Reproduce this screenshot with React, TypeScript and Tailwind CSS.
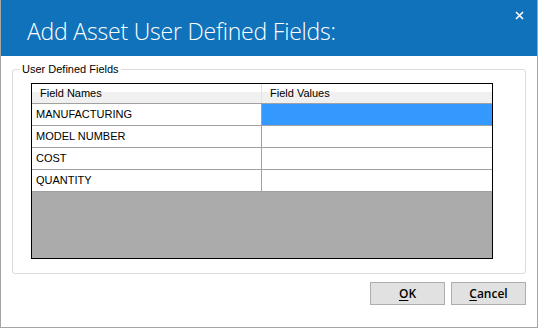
import React from 'react';

const rows = ['MANUFACTURING', 'MODEL NUMBER', 'COST', 'QUANTITY'];

const App: React.FC = () => {
  return (
    <div className="w-[538px] h-[328px] bg-white border-x border-b border-[#a5a5a5] flex flex-col font-['Liberation_Sans',Arial,sans-serif] text-[11px] text-black">
      {/* Title bar */}
      <div className="relative h-[56px] shrink-0 bg-[#1072bb] flex items-center pl-[26px]">
        <h1 className="font-['Open_Sans',sans-serif] font-light text-[23px] text-white tracking-[-0.2px] leading-none pt-[6px]">
          Add Asset User Defined Fields:
        </h1>
        <button className="absolute right-[13px] top-[11px] w-[9px] h-[9px] flex items-center justify-center">
          <svg width="9" height="9" viewBox="0 0 9 9">
            <path d="M1 1 L8 8 M8 1 L1 8" stroke="white" strokeWidth="1.6" />
          </svg>
        </button>
      </div>

      {/* Body */}
      <div className="flex-1 flex flex-col px-[11px] pt-[7px]">
        <fieldset className="border border-[#dcdcdc] rounded-[3px] pb-[14px] pt-[7px]">
          <legend className="ml-[7px] px-[2px] leading-[13px]">User Defined Fields</legend>

          {/* Grid */}
          <div className="ml-[18px] w-[462px] h-[176px] border border-black flex flex-col bg-[#ababab]">
            <div className="flex h-[20px] shrink-0 bg-[linear-gradient(to_bottom,#ffffff_0%,#ffffff_40%,#f0f0f0_41%,#f0f0f0_100%)] border-b border-[#a0a0a0]">
              <div className="w-[230px] flex items-center pl-[8px] border-r border-[#e3e3e3]">Field Names</div>
              <div className="flex-1 flex items-center pl-[8px] mr-[2px]">Field Values</div>
            </div>
            {rows.map((name, i) => (
              <div key={name} className="flex h-[22px] shrink-0 bg-white border-b border-[#a0a0a0]">
                <div className="w-[230px] flex items-center pl-[4px] border-r border-[#a0a0a0]">{name}</div>
                <div className={i === 0 ? 'flex-1 bg-[#3399ff]' : 'flex-1'} />
              </div>
            ))}
            <div className="flex-1" />
          </div>
        </fieldset>

        <div className="flex justify-end gap-[6px] mt-[8px]">
          <button className="w-[75px] h-[23px] bg-[#e1e1e1] border border-[#adadad] font-['Open_Sans',sans-serif] font-semibold text-[12px] leading-none">
            <span className="underline underline-offset-2">O</span>K
          </button>
          <button className="w-[75px] h-[23px] bg-[#e1e1e1] border border-[#adadad] font-['Open_Sans',sans-serif] font-semibold text-[12px] leading-none">
            <span className="underline underline-offset-2">C</span>ancel
          </button>
        </div>
      </div>
    </div>
  );
};

export default App;
